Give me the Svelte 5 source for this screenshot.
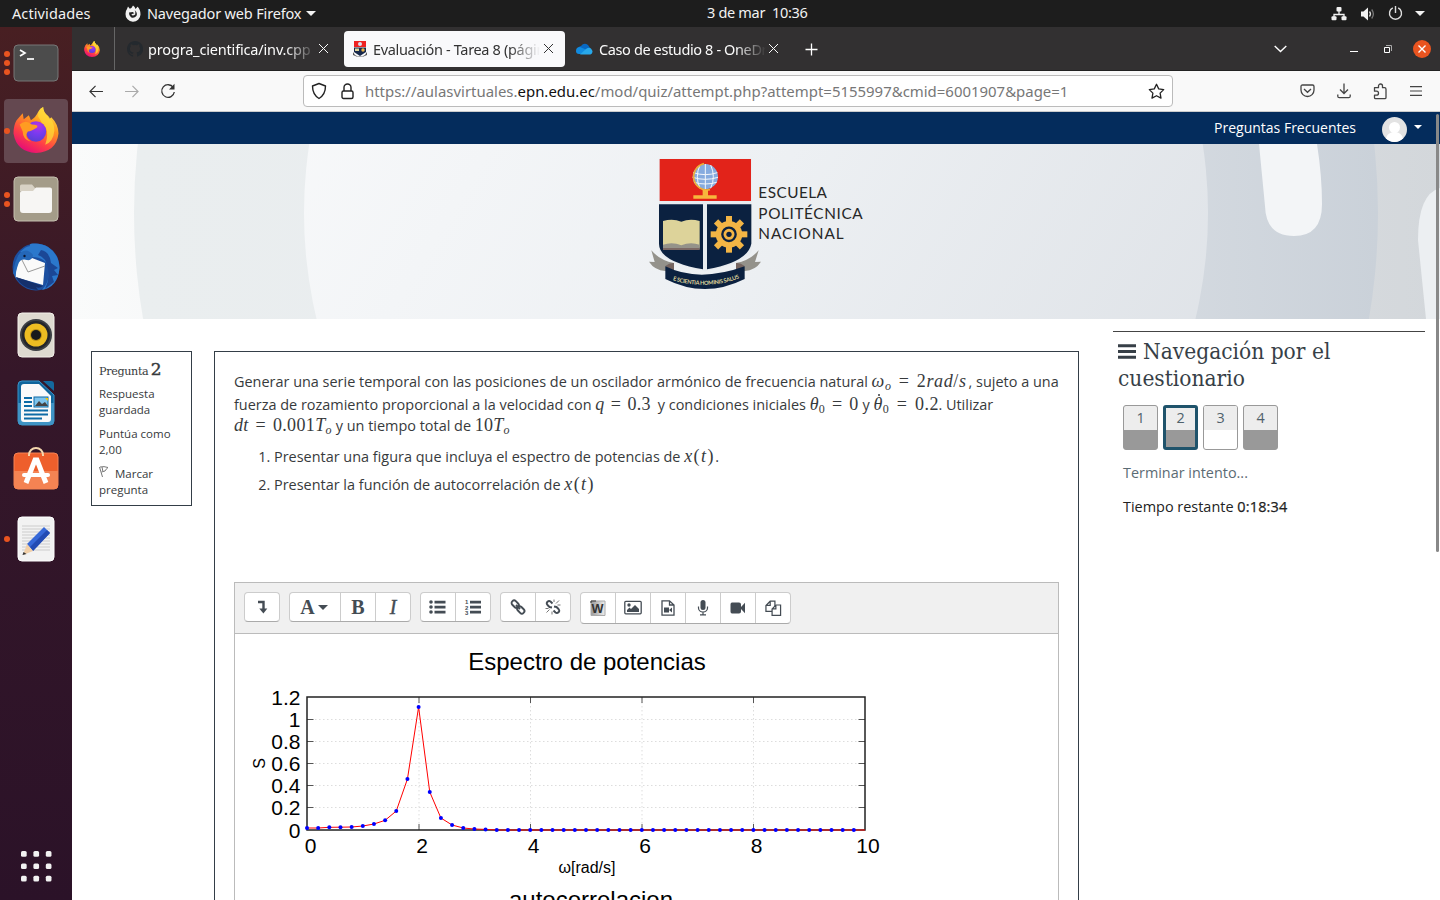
<script>
  const power = [828, 828, 827.3, 827.2, 827, 826, 824, 820.3, 811, 779, 707, 792, 818, 825, 828, 829, 829.4];
  const points = Array.from({ length: 51 }, (_, i) => ({
    x: 307 + i * 11.16,
    y: i < power.length ? power[i] : 830
  }));
  const line = points.map((p) => `${p.x},${p.y}`).join(' ');
  const xTicks = [0, 2, 4, 6, 8, 10].map((v) => ({ v, x: 307.5 + v * 55.75 }));
  const yTicks = [0, 0.2, 0.4, 0.6, 0.8, 1, 1.2].map((v) => ({ v, y: Math.round(829.6 - v * 110.8) + 0.5 }));
  const questions = [
    { n: 1, answered: true },
    { n: 2, answered: true, current: true },
    { n: 3, answered: false },
    { n: 4, answered: true }
  ];
  const teeth = [0, 45, 90, 135, 180, 225, 270, 315];
  const grid = [0, 1, 2].flatMap((r) => [0, 1, 2].map((c) => ({ x: 3 + c * 12, y: 3 + r * 12 })));
</script>

{#snippet firefox(size)}
  <svg width={size} height={size} viewBox="0 0 44 45">
    <defs>
      <linearGradient id="fxBody" x1="0.8" y1="0" x2="0.25" y2="1">
        <stop offset="0" stop-color="#fff44f" /><stop offset="0.35" stop-color="#ff9a1e" />
        <stop offset="0.68" stop-color="#ff4046" /><stop offset="1" stop-color="#e2067e" />
      </linearGradient>
      <radialGradient id="fxGlobe" cx="0.6" cy="0.2" r="0.8">
        <stop offset="0" stop-color="#b833e1" /><stop offset="0.5" stop-color="#7b3af0" /><stop offset="1" stop-color="#5a3fd6" />
      </radialGradient>
    </defs>
    <path d="M3 13 L9 6 L10 12 L15 8 L17 13 Q22 10 24 5 Q26 1 29 0 Q29 5 34 9 L35 12 L37 10 Q44 17 44 26 Q42 44 22 45 Q3 44 0 26 Q0 18 3 13Z" fill="url(#fxBody)" />
    <path d="M24 9 Q24 3 29 0 Q29 6 34 9 Q40 14 40 23 Q39 34 31 37 Q36 22 28 16Z" fill="#ffda38" opacity="0.75" />
    <circle cx="22" cy="24" r="10" fill="url(#fxGlobe)" />
    <path d="M6 17 Q12 12 18 17 Q25 17 23 20 Q17 24 14 24 Q10 29 17 34 Q9 32 9 24Z" fill="#ff9c22" />
  </svg>
{/snippet}

<div class="desktop">
  <header class="system">
    <span class="activities">Actividades</span>
    <svg class="fx-mono" width="16" height="17" viewBox="0 0 16 17"><path d="M2 4 3 1.5 4.8 3.7 Q7 3 8 .5 Q10 1.5 10.5 4 Q13 1 12.5 1.5 Q15.7 5 15.5 9.5 A7.5 7.5 0 0 1 .5 9 Q.4 6 2 4Z" fill="#f2f2f2" /><path d="M4 7.4 7.8 7 9.3 8.3 6.4 9.3 Q7.3 11.5 10.2 9.6 Q10.8 6.4 9.6 5 Q13 7.8 11.4 11 Q9 13.7 6 12.2 Q3.8 10.8 4 7.4Z" fill="#222" /></svg>
    <span class="appname">Navegador web Firefox</span>
    <i class="down"></i>
    <span class="clock">3 de mar&nbsp; 10:36</span>
    <div class="status">
      <svg width="16" height="14" viewBox="0 0 16 14"><path d="M8 4v3M3 10V7.5h10V10" fill="none" stroke="#f2f2f2" stroke-width="1.3" /><g fill="#f2f2f2"><rect x="5.5" y="0" width="5" height="4.5" rx="1" /><rect x=".5" y="9.2" width="5" height="4" rx="1" /><rect x="10.5" y="9.2" width="5" height="4" rx="1" /></g></svg>
      <svg width="16" height="14" viewBox="0 0 16 14"><path d="M1 4.5h2.500L8 .5v13L3.500 9.500H1z" fill="#f2f2f2" /><path d="M9.500 4.500q2 2.500 0 5" fill="none" stroke="#ddd" stroke-width="1.3" /><path d="M11.700 2.500q3.400 4.500 0 9" fill="none" stroke="#777" stroke-width="1.3" /></svg>
      <svg width="15" height="15" viewBox="0 0 15 15"><path d="M4.800 1.900a6 6 0 1 0 5.400 0M7.500 0v7" fill="none" stroke="#ddd" stroke-width="1.4" /></svg>
      <i class="down"></i>
    </div>
  </header>

  <div class="workspace">
    <nav class="dock">
      <div class="app">
        <i class="dots"><b></b><b></b><b></b></i>
        <svg width="46" height="38" viewBox="0 0 46 38"><rect x="1" y="1" width="44" height="36" rx="4" fill="#4c4c4c" stroke="#777" /><path d="M7 6l5 3-5 3" fill="none" stroke="#fff" stroke-width="1.700" /><path d="M14 15h7" stroke="#fff" stroke-width="1.700" /></svg>
      </div>
      <div class="app active"><i class="dots"><b></b></i>{@render firefox(46)}</div>
      <div class="app">
        <i class="dots"><b></b><b></b></i>
        <svg width="46" height="46" viewBox="0 0 46 46"><rect x="1" y="1" width="44" height="44" rx="4" fill="#a49c89" stroke="#c5bfaf" /><path d="M7 15V10q0-1.500 1.500-1.500H19l3 3.500h15v6z" fill="#d8d2c5" /><path d="M7 17q0-2 2-2h11l3-3.500h14q2 0 2 2V34q0 3-3 3H10q-3 0-3-3z" fill="#f7f6f4" /></svg>
      </div>
      <div class="app">
        <svg width="48" height="48" viewBox="0 0 48 48">
          <circle cx="24" cy="24" r="23.500" fill="#1c4fa0" />
          <path d="M8 9Q14 3 18 3Q17 1 20 .500Q30 0 36 4Q47 11 47.500 25Q46 44 30 47Q38 38 37 26Q34 14 20 14Z" fill="#2b78cc" />
          <path d="M29 7q9 2 10 13l7 5-4 2 4 5-6 1 2 6-9 7q5-10 3-20-2-12-10-14z" fill="#1b4796" />
          <path d="M7 12Q16 19 20 15L33 20 31 42 3 34Z" fill="#fafafa" />
          <path d="M8 13l8 16 17-6" fill="none" stroke="#999" />
          <path d="M1 30Q3 16 8 10Q15 4 21 12Q20 18 15 17Q8 15 6 22Q3 29 4 35Z" fill="#2467b8" />
          <path d="M4 34l27 9q-4 3-7 1l2 3Q10 46 4 34z" fill="#15306c" />
          <circle cx="12.500" cy="13" r="1.200" fill="#0b1530" />
        </svg>
      </div>
      <div class="app">
        <svg width="38" height="46" viewBox="0 0 38 46"><rect x="1" y="1" width="36" height="44" rx="4" fill="#dedad0" stroke="#f3f0ea" /><circle cx="19" cy="23" r="16" fill="#3c3f43" /><circle cx="19" cy="23" r="14" fill="#24262a" /><circle cx="19" cy="23" r="11.500" fill="#edbd22" /><circle cx="19" cy="23" r="6" fill="#b98e13" /><circle cx="19" cy="23" r="5" fill="#17191c" /></svg>
      </div>
      <div class="app">
        <svg width="38" height="46" viewBox="0 0 38 46"><path d="M5 1H22L37 15V41q0 4-4 4H5q-4 0-4-4V5q0-4 4-4z" fill="#0f659c" stroke="#3b94c7" /><path d="M1 23h36v18q0 4-4 4H5q-4 0-4-4z" fill="#3f94c5" /><path d="M7 4H22L34 16V39q0 3-3 3H7q-3 0-3-3V7q0-3 3-3z" fill="#fafafa" /><path d="M26 1H34q3 0 3 3V11z" fill="#14699e" /><path d="M7 18h8M7 22h8M7 26h8M7 30.500h24M7 34.500h24M7 38.500h18" stroke="#0d6ba6" stroke-width="1.800" /><rect x="17" y="17" width="14" height="10" fill="#7ec4ec" stroke="#0d6ba6" /><path d="M18 26l4-5 3 3 3-2 3 4z" fill="#444" /><path d="M28 18h3v3z" fill="#f4c600" /></svg>
      </div>
      <div class="app store">
        <svg width="46" height="44" viewBox="0 0 46 44"><rect x="1" y="7" width="44" height="36" rx="4" fill="#ee5f2c" stroke="#f78354" /><path d="M1 25h44v14q0 4-4 4H5q-4 0-4-4z" fill="#f48353" /><path d="M16 10V9a7 7 0 0 1 14 0v1" fill="none" stroke="#f4d7ad" stroke-width="2" /><path d="M13 37 22 14h2l9 23" fill="none" stroke="#fff" stroke-width="5" /><rect x="9" y="27" width="28" height="4" rx="2" fill="#fff" /></svg>
      </div>
      <div class="app">
        <i class="dots"><b></b></i>
        <svg width="38" height="46" viewBox="0 0 38 46"><rect x="1" y="1" width="36" height="44" rx="4" fill="#f2f2f2" stroke="#fff" /><path d="M5 10h28M5 13h28M5 16h28M5 19h28M5 22h28M5 25h28M5 28h28M5 31h28M5 34h28" stroke="#ccc" /><path d="M10 28 27 11l6 6-17 18z" fill="#3668d8" /><path d="M13 31 30 14l3 3-17 18z" fill="#234bb4" /><path d="M10 28l6 7-10 4z" fill="#f1cfa8" /><path d="M6.500 36l3 2-4 1z" fill="#333" /></svg>
      </div>
      <svg class="grid" width="31" height="31" viewBox="0 0 30 30">{#each grid as g}<rect x={g.x - 3} y={g.y - 3} width="5.500" height="5.500" rx="1.500" fill="#f2f2f2" />{/each}</svg>
    </nav>

    <main class="browser">
      <div class="tabs">
        <div class="pinned">{@render firefox(16)}</div>
        <div class="tab">
          <svg width="16" height="16" viewBox="0 0 16 16"><path fill="#24292e" d="M8 0C3.580 0 0 3.580 0 8c0 3.540 2.290 6.530 5.470 7.590.4.070.55-.17.55-.38v-1.340c-2.230.48-2.700-1.070-2.700-1.070-.36-.92-.89-1.170-.89-1.170-.73-.5.050-.49.050-.49.8.060 1.230.83 1.230.83.71 1.220 1.870.87 2.330.66.070-.52.280-.87.510-1.070-1.780-.2-3.640-.89-3.640-3.950 0-.87.310-1.590.82-2.150-.08-.2-.36-1.020.08-2.120 0 0 .67-.21 2.200.82a7.600 7.600 0 0 1 4 0c1.530-1.040 2.200-.82 2.200-.82.44 1.100.16 1.920.08 2.120.51.560.82 1.270.82 2.150 0 3.070-1.870 3.750-3.650 3.950.29.250.54.730.54 1.480v2.200c0 .21.15.46.55.38A8 8 0 0 0 8 0z" /></svg>
          <span class="title t1">progra_cientifica/inv.cpp</span><i class="x"></i>
        </div>
        <div class="tab selected">
          <svg width="14" height="16" viewBox="0 0 14 16"><path d="M1 0h12v6H1z" fill="#e22" /><circle cx="7" cy="3" r="2" fill="#dde" /><path d="M1 6.500h12V11l-6 4-6-4z" fill="#17284a" /><path d="M2 7.500h4V10H2z" fill="#ddd49a" /><circle cx="10" cy="9" r="1.700" fill="#e9b44a" /><path d="M0 11l2 3q5 3 10 0l2-3v3q-7 4-14 0z" fill="#555" /></svg>
          <span class="title t2">Evaluación - Tarea 8 (página</span><i class="x"></i>
        </div>
        <div class="tab third">
          <svg width="17" height="12" viewBox="0 0 17 12"><path d="M2 8Q1 4 5 3Q8-1 12 2L14 5 9 8Z" fill="#0868c2" /><path d="M0 8Q0 4 4 4L11 7 16 11H3Q0 11 0 8Z" fill="#118be0" /><path d="M10 6q4-3 6 1 1.500 3-1.500 4.500H4z" fill="#28a8ea" /></svg>
          <span class="title t3">Caso de estudio 8 - OneDrive</span><i class="x"></i>
        </div>
        <svg class="plus" width="13" height="13" viewBox="0 0 13 13"><path d="M6.500 .5v12M.5 6.500h12" stroke="#fff" stroke-width="1.300" /></svg>
        <div class="window">
          <svg class="w-list" width="13" height="8" viewBox="0 0 13 8"><path d="M.7 1l5.800 5.500L12.300 1" fill="none" stroke="#fff" stroke-width="1.400" /></svg>
          <svg class="w-min" width="8" height="8" viewBox="0 0 8 8"><path d="M0 6.500h8" stroke="#fff" /></svg>
          <svg class="w-max" width="8" height="8" viewBox="0 0 8 8"><path d="M.5 2.500h5v5h-5z" fill="none" stroke="#fff" /><path d="M2 .5h5.500V6" fill="none" stroke="#aaa" /></svg>
          <svg width="18" height="18" viewBox="0 0 18 18"><circle cx="9" cy="9" r="9" fill="#e95420" /><path d="M5.500 5.500l7 7m0-7l-7 7" stroke="#fff" stroke-width="1.400" /></svg>
        </div>
      </div>

      <div class="toolbar">
        <svg width="14" height="13" viewBox="0 0 15 14"><path d="M7 1L1 7l6 6M1 7h14" fill="none" stroke="#333" stroke-width="1.300" /></svg>
        <svg class="fwd" width="14" height="13" viewBox="0 0 15 14"><path d="M8 1l6 6-6 6M14 7H0" fill="none" stroke="#aaa" stroke-width="1.300" /></svg>
        <svg class="reload" width="16" height="16" viewBox="0 0 16 16"><path d="M13.300 4.500A6.300 6.300 0 1 0 14.300 9" fill="none" stroke="#333" stroke-width="1.300" /><path d="M14.500 .8v5.700H9z" fill="#333" /></svg>
        <div class="url">
          <svg width="16" height="18" viewBox="0 0 16 18"><path d="M8 1.500L14.500 4q0 8.500-6.500 12.500Q1.500 12.500 1.500 4z" fill="none" stroke="#222" stroke-width="1.400" stroke-linejoin="round" /></svg>
          <svg class="lock" width="13" height="17" viewBox="0 0 13 17"><path d="M3 8V4.500a3.500 3.500 0 0 1 7 0V8" fill="none" stroke="#222" stroke-width="1.400" /><rect x="1" y="8" width="11" height="7.500" rx="1.500" fill="none" stroke="#222" stroke-width="1.400" /></svg>
          <span class="address">https://aulasvirtuales.<b>epn.edu.ec</b>/mod/quiz/attempt.php?attempt=5155997&amp;cmid=6001907&amp;page=1</span>
          <svg class="star" width="17" height="17" viewBox="0 0 17 17"><path d="M8.500 1.300l2.200 4.600 5 .7-3.600 3.500.9 5-4.500-2.400-4.500 2.400.9-5L1.300 6.600l5-.7z" fill="none" stroke="#222" stroke-width="1.300" stroke-linejoin="round" /></svg>
        </div>
        <div class="tools">
          <svg width="15" height="14" viewBox="0 0 15 14"><path d="M2.500 1h10q1.500 0 1.500 1.500V6a6.500 6.500 0 0 1-13 0V2.500Q1 1 2.500 1z" fill="none" stroke="#444" stroke-width="1.300" /><path d="M4 5l3.500 3.300L11 5" fill="none" stroke="#444" stroke-width="1.300" /></svg>
          <svg width="14" height="16" viewBox="0 0 14 16"><path d="M7 .5v10M3 6.500l4 4 4-4M.8 11.500v1.700q0 1.500 1.500 1.500h9.400q1.500 0 1.500-1.500v-1.700" fill="none" stroke="#444" stroke-width="1.300" /></svg>
          <svg width="15" height="17" viewBox="0 0 15 17"><path d="M1.500 4.700h4V3a2 2 0 0 1 4 0v1.700h2q1.500 0 1.500 1.500v8.300q0 1.200-1.200 1.200H2.500q-1 0-1-1.200v-2.300h2a2 2 0 0 0 0-4h-2z" fill="none" stroke="#444" stroke-width="1.300" stroke-linejoin="round" /></svg>
          <svg width="12" height="10" viewBox="0 0 12 10"><path d="M0 .7h12M0 5h12M0 9.300h12" stroke="#444" stroke-width="1.200" /></svg>
        </div>
      </div>

      <section class="page">
        <div class="topnav">
          <span>Preguntas Frecuentes</span>
          <svg width="25" height="25" viewBox="0 0 25 25"><defs><clipPath id="face"><circle cx="12.500" cy="12.500" r="12.500" /></clipPath></defs><g clip-path="url(#face)"><path d="M0 0h25v25H0z" fill="#e3e3e3" /><circle cx="12.500" cy="10.500" r="5.500" fill="#fff" /><ellipse cx="12.500" cy="22" rx="8.500" ry="7" fill="#fff" /></g></svg>
          <i class="down"></i>
        </div>

        <svg class="banner" width="1368" height="175" viewBox="72 144 1368 175">
          <defs>
            <linearGradient id="ban"><stop offset="0" stop-color="#fafbfb" /><stop offset="1" stop-color="#d3d7db" /></linearGradient>
            <linearGradient id="mid" x1="0" y1="0.2" x2="1" y2="0.8"><stop offset="0" stop-color="#f9fafb" /><stop offset="0.5" stop-color="#edf0f3" /><stop offset="1" stop-color="#dde1e6" /></linearGradient>
            <linearGradient id="ring"><stop offset="0" stop-color="#eaeeef" /><stop offset="0.5" stop-color="#e8ebee" /><stop offset="1" stop-color="#cad1d9" /></linearGradient>
          </defs>
          <path d="M72 144h1368v175H72z" fill="url(#ban)" />
          <circle cx="756" cy="213" r="622" fill="url(#ring)" />
          <circle cx="756" cy="213" r="452" fill="url(#mid)" />
          <path d="M1259 144h58q5 32 5 60 0 32-28 32t-29-30z" fill="#f3f5f7" />
          <path d="M1440 188q-22 6-22 52l8 79h14z" fill="#eceff2" />
          <g transform="translate(630 145) scale(.33333)">
            <path d="M87 41h278v278q-12 34-140 60Q97 350 87 319z" fill="#e8ecf0" />
            <path d="M89 42h274v126H89z" fill="#e2231a" />
            <circle cx="226" cy="95" r="38" fill="#86abdf" />
            <g fill="none" stroke="#f4f7fb" stroke-width="3"><path d="M226 57v76M210 60q-16 35 0 70M242 60q16 35 0 70M190 83q36 12 72 0M188 97q38 12 76 0M192 112q34 10 68 0" /></g>
            <path d="M222 56a40 40 0 1 0 18 78" fill="none" stroke="#efad37" stroke-width="5" /><path d="M218 134h16v17h26v10h-70v-10h28z" fill="#f7b73c" />
            <path d="M87 178h132v195Q87 350 87 296zM231 178h133v118q-10 55-133 77z" fill="#0b2140" />
            <path d="M99 228q30-8 55 2 25-10 55-2v80q-28-10-55-1-27-9-55 1z" fill="#ddd39a" /><path d="M99 299q28-10 55 2 27-12 55-2v14H99z" fill="#95938a" /><path d="M99 309h110v6H99z" fill="#7b6864" />
            {#each teeth as a}<rect x="288" y="213" width="18" height="24" fill="#f3b545" transform="rotate({a} 297 268)" />{/each}
            <circle cx="297" cy="268" r="40" fill="#f3b545" /><circle cx="297" cy="268" r="20" fill="none" stroke="#0b2140" stroke-width="7" /><circle cx="297" cy="268" r="8" fill="#0b2140" />
            <path d="M57 350l17 1-10-35q25 30 68 38v28l-26-4q-32-2-49-28zM393 350l-18 1 11-35q-25 30-68 38v28l26-4q32-2 49-28z" fill="#94928b" />
            <path d="M106 363q12-10 26-9v35zM344 363q-12-10-26-9v35z" fill="#75645f" />
            <path d="M106 364q100 50 238 0v38q-120 60-238 0z" fill="#0b2140" />
            <path id="arc" d="M128 405q100 32 202-6" fill="none" />
            <text class="motto"><textPath href="#arc" textLength="204">E SCIENTIA HOMINIS SALUS</textPath></text>
            <g class="school"><text x="385" y="160" textLength="206">ESCUELA</text><text x="385" y="221" textLength="313">POLITÉCNICA</text><text x="385" y="282" textLength="256">NACIONAL</text></g>
          </g>
        </svg>

        <div class="columns">
          <aside class="info">
            <h3>Pregunta <b>2</b></h3>
            <p>Respuesta guardada</p>
            <p>Puntúa como 2,00</p>
            <p><svg width="10" height="12" viewBox="0 0 10 12"><path d="M.5 1l3 10M1 1q4-1 8 .5Q7 3 6 5L2.500 6M3 1l.8 4" fill="none" stroke="#777" /></svg>Marcar pregunta</p>
          </aside>

          <article class="question">
            <div class="l1">Generar una serie temporal con las posiciones de un oscilador armónico de frecuencia natural <span class="m w-omega"><i>ω<sub>o</sub></i> = 2<i>rad</i>/<i>s</i></span>, sujeto a una</div>
            <div class="l2">fuerza de rozamiento proporcional a la velocidad con <span class="m w-q"><i>q</i> = 0.3</span>&nbsp; y condiciones iniciales <span class="m w-th"><i>θ</i><sub>0</sub> = 0</span> y <span class="m w-dth"><i class="dotted">θ</i><sub>0</sub> = 0.2</span>. Utilizar</div>
            <div class="l3"><span class="m w-dt"><i>dt</i> = 0.001<i>T<sub>o</sub></i></span> y un tiempo total de <span class="m w-10t">10<i>T<sub>o</sub></i></span></div>
            <ol>
              <li>Presentar una figura que incluya el espectro de potencias de <span class="m w-x"><i>x</i>(<i>t</i>)</span>.</li>
              <li>Presentar la función de autocorrelación de <span class="m w-x"><i>x</i>(<i>t</i>)</span></li>
            </ol>

            <div class="editor">
              <div class="buttons">
                <div class="group"><span><svg width="16" height="16" viewBox="0 0 16 16"><path d="M4 3h5.500v8" fill="none" stroke="#444c54" stroke-width="2.400" /><path d="M5.300 9.500h8L9.400 14.500z" fill="#444c54" /></svg></span></div>
                <div class="group"><span class="font">A<i class="down"></i></span><span class="letter">B</span><span class="letter it">I</span></div>
                <div class="group">
                  <span><svg width="18" height="14" viewBox="0 0 18 14"><g fill="#444c54"><circle cx="2" cy="2" r="1.800" /><circle cx="2" cy="7" r="1.800" /><circle cx="2" cy="12" r="1.800" /><path d="M5.500 .7h11v2.700h-11zM5.500 5.700h11v2.700h-11zM5.500 10.700h11v2.700h-11z" /></g></svg></span>
                  <span><svg width="18" height="16" viewBox="0 0 18 16"><g fill="#444c54"><path d="M6 1.700h11v2.700H6zM6 6.700h11v2.700H6zM6 11.700h11v2.700H6z" /><g class="nums"><text x="1" y="5">1</text><text x="1" y="10.500">2</text><text x="1" y="16">3</text></g></g></svg></span>
                </div>
                <div class="group">
                  <span><svg width="16" height="16" viewBox="0 0 16 16"><g fill="none" stroke="#444c54" stroke-width="1.900"><rect x="1.200" y="2.600" width="8" height="5" rx="2.400" transform="rotate(45 5.200 5.100)" /><rect x="6.800" y="8.400" width="8" height="5" rx="2.400" transform="rotate(45 10.800 10.900)" /><path d="M6 6l4 4" /></g></svg></span>
                  <span><svg width="16" height="16" viewBox="0 0 16 16"><g fill="none" stroke="#444c54" stroke-width="1.900"><path d="M7.500 4.500L5.500 2.500Q4 1.300 2.500 2.700T2.500 6L4.500 8 7 8.500M8.500 11.500l2 2q1.500 1.200 3-.2t0-3.300L11.500 8 9 7.500" /><path d="M9 3V.5M11 4.500l3-3M12.500 6h3M4.500 10.500L1.500 13.500M3.500 9.500H.5M7 12.500v3" stroke-width="1" stroke="#777" /></g></svg></span>
                </div>
                <div class="group tall">
                  <span><svg width="16" height="16" viewBox="0 0 16 16"><defs><linearGradient id="wd"><stop offset="0" stop-color="#999" /><stop offset="1" stop-color="#eee" /></linearGradient></defs><path d="M1 1h14v14.500H1z" fill="url(#wd)" stroke="#aaa" /><path d="M1 3V1h5" stroke="#333" fill="none" /><text class="word" x="1.500" y="13" textLength="12" lengthAdjust="spacingAndGlyphs">W</text></svg></span>
                  <span><svg width="18" height="16" viewBox="0 0 18 16"><rect x=".8" y="1.300" width="16.400" height="12.500" rx="1" fill="none" stroke="#444c54" stroke-width="1.300" /><circle cx="5" cy="5" r="1.700" fill="#444c54" /><path d="M3 12V10l2.500-2.500L7 9l4-4 4 4v3z" fill="#444c54" /></svg></span>
                  <span><svg width="14" height="16" viewBox="0 0 14 16"><path d="M1 .8h7.500L13 5v10.200H1zM8.500 .8V5H13" fill="none" stroke="#444c54" stroke-width="1.300" /><path d="M3 7.500h5v5H3zM8 10l3-2.500v5z" fill="#444c54" /></svg></span>
                  <span><svg width="12" height="16" viewBox="0 0 12 16"><rect x="3.500" y="0" width="5" height="10" rx="2.500" fill="#444c54" /><path d="M1.500 6.500V8a4.500 4 0 0 0 9 0V6.500M6 12v2.500M3 14.800h6" fill="none" stroke="#444c54" stroke-width="1.200" /></svg></span>
                  <span><svg width="16" height="14" viewBox="0 0 16 14"><path d="M2 1.500h7q2 0 2 2V6l4-4.200V12.200L11 8v2.500q0 2-2 2H2q-1.500 0-1.500-2v-7Q.5 1.500 2 1.500z" fill="#444c54" /></svg></span>
                  <span><svg width="17" height="17" viewBox="0 0 18 17"><g fill="#fff" stroke="#444c54" stroke-width="1.300"><path d="M5.500 .8h5V11.500H1V5.300zM5.500 .8V5.300H1" /><path d="M11.500 4.800h5v11h-9V9zM11.500 4.800V9H7.500" /></g></svg></span>
                </div>
              </div>
              <svg class="chart" width="824" height="266" viewBox="235 634 824 266">
                <g class="big"><text x="587" y="670">Espectro de potencias</text><text x="591" y="908">autocorrelacion</text></g>
                <g stroke="#ddd" stroke-dasharray="1.500 2.500">
                  {#each xTicks.slice(1, -1) as t}<path d="M{t.x} 698V830" />{/each}
                  {#each yTicks.slice(1, -1) as t}<path d="M307 {t.y}H865" />{/each}
                </g>
                <g stroke="#555">
                  {#each xTicks.slice(1, -1) as t}<path d="M{t.x} 697v6M{t.x} 830v-6" />{/each}
                  {#each yTicks.slice(1, -1) as t}<path d="M307 {t.y}h6.500M865 {t.y}h-6.500" />{/each}
                </g>
                <rect x="307" y="697" width="558" height="133" fill="none" stroke="#222" stroke-width="1.500" />
                <polyline points={line} fill="none" stroke="#f00" stroke-width="1" />
                {#each points.slice(0, -1) as p}<circle cx={p.x} cy={p.y} r="2" fill="#00f" />{/each}
                <g class="ticks">
                  {#each xTicks as t}<text x={t.x + 3} y="853">{t.v}</text>{/each}
                  {#each yTicks as t}<text class="end" x="300.500" y={t.y + 7}>{t.v}</text>{/each}
                </g>
                <g class="label"><text x="587" y="873">ω[rad/s]</text><text transform="translate(265 763.5) rotate(-90)">S</text></g>
              </svg>
            </div>
          </article>

          <aside class="quiznav">
            <h2><svg width="18" height="15" viewBox="0 0 18 15"><path d="M0 1.700h18M0 7.500h18M0 13.300h18" stroke="#373f47" stroke-width="3" /></svg>Navegación por el cuestionario</h2>
            <div class="qs">
              {#each questions as q}<div class="q" class:answered={q.answered} class:current={q.current}><span>{q.n}</span></div>{/each}
            </div>
            <a href="#finish">Terminar intento...</a>
            <p>Tiempo restante <b>0:18:34</b></p>
          </aside>
        </div>
        <i class="scroll"></i>
      </section>
    </main>
  </div>
</div>

<style>
  :global(body) { overflow: hidden; }
  .desktop { width: 1440px; height: 900px; overflow: hidden; display: flex; flex-direction: column; font-family: "Open Sans", sans-serif; color: #373a3c; background: #fff; }
  svg { display: block; flex: none; }
  .down { flex: none; border: 5px solid transparent; border-top-color: currentColor; border-bottom: 0; }
  .system { flex: none; height: 27px; background: #1d1d1d; color: #f2f2f2; display: flex; align-items: center; position: relative; font: 14.5px/20px "Noto Sans", sans-serif; white-space: nowrap; }
  .activities { margin-left: 12px; width: 113px; margin-top: -2px; letter-spacing: .1px; }
  .appname { margin: -2px 5px 0 6px; width: 154px; letter-spacing: -.16px; }
  .clock { position: absolute; left: 707px; top: 2px; letter-spacing: -.32px; }
  .status { margin-left: auto; margin-right: 15px; display: flex; gap: 12px; align-items: center; }
  .status svg:first-child { margin-right: 1px; }
  .workspace { display: flex; flex: 1; min-height: 0; }
  .dock { width: 72px; box-sizing: border-box; padding: 4px 4px 18px; flex: none; display: flex; flex-direction: column; gap: 4px; background: linear-gradient(#481f22, #351729 40%, #2b1228); }
  .app { height: 64px; flex: none; display: flex; align-items: center; justify-content: center; position: relative; border-radius: 4px; }
  .active { background: #644850; padding-bottom: 2px; height: 62px; }
  .store { padding-bottom: 6px; height: 58px; }
  .dots { position: absolute; left: 0; top: 0; bottom: 0; display: flex; flex-direction: column; justify-content: center; gap: 3px; }
  .dots b { width: 6px; height: 6px; border-radius: 50%; background: #e95420; }
  .grid { margin: auto auto 0; }
  .browser { width: 1368px; display: flex; flex-direction: column; }
  .tabs { height: 44px; flex: none; box-sizing: border-box; background: #323031; color: #fbfbfb; display: flex; align-items: center; font: 14.5px/20px "Noto Sans", sans-serif; border-bottom: 1px solid #222; }
  .pinned { width: 42px; height: 43px; border-right: 1px solid #666; display: flex; align-items: center; justify-content: center; }
  .pinned :global(svg) { margin-left: -2px; }
  .tab { display: flex; align-items: center; height: 36px; width: 217px; padding-left: 12px; box-sizing: border-box; margin-top: 1px; }
  .title { width: 167px; margin-left: 6px; overflow: hidden; white-space: nowrap; mask-image: linear-gradient(90deg, #000 82%, transparent); }
  .t1 { letter-spacing: -.17px; margin-left: 5px; width: 168px; }
  .t2 { letter-spacing: -.33px; }
  .t3 { letter-spacing: -.38px; }
  .selected { width: 221px; margin-left: 12px; background: #f9f9fb; color: #333; border-radius: 4px; padding-left: 9px; }
  .third { padding-left: 11px; }
  .x { flex: none; width: 9px; height: 9px; margin: -2px 0 0 3px; background: linear-gradient(45deg, transparent 46%, currentColor 46% 54%, transparent 54%), linear-gradient(-45deg, transparent 46%, currentColor 46% 54%, transparent 54%); }
  .selected .x { margin-left: 4px; }
  .plus { margin: 1px 0 0 23px; }
  .window { margin-left: auto; margin-right: 9px; display: flex; align-items: center; }
  .w-list { margin-right: 63px; }
  .w-min { margin-right: 26px; }
  .w-max { margin-right: 21px; }
  .toolbar { height: 40px; flex: none; background: #f9f9f9; border-bottom: 1px solid #ccc; display: flex; align-items: center; padding-left: 17px; }
  .fwd { margin-left: 22px; }
  .reload { margin-left: 21px; }
  .url { margin-left: 127px; width: 868px; height: 30px; border: 1px solid #bbb; border-radius: 4px; background: #fff; display: flex; align-items: center; color: #777; font: 14.940px/20px "Noto Sans", sans-serif; }
  .url svg:first-child { margin-left: 7px; }
  .lock { margin-left: 14px; }
  .address { margin-left: 11px; white-space: nowrap; }
  .address b { color: #111; font-weight: 400; }
  .star { margin-left: auto; margin-right: 7px; }
  .tools { flex: 1; display: flex; justify-content: flex-end; align-items: center; gap: 22px; padding-right: 18px; }
  .page { flex: 1; min-height: 0; position: relative; display: flex; flex-direction: column; background: #fff; overflow: hidden; }
  .topnav { height: 32px; flex: none; background: #042c5c; color: #fff; display: flex; align-items: center; justify-content: flex-end; padding-right: 18px; font-size: 14px; }
  .topnav span { margin-top: -1px; }
  .topnav svg { margin: 2px 7px 0 26px; }
  .topnav .down { border-width: 4px 4px 0; margin-top: -2px; }
  .motto { font: bold 17px Lato, sans-serif; fill: #ddd39a; }
  .school { font: 46px Lato, sans-serif; fill: #272727; }
  .columns { display: flex; padding: 12px 15px 0 19px; align-items: flex-start; }
  .info { width: 101px; height: 155px; box-sizing: border-box; margin-top: 20px; padding: 7px 7px 0; border: 1px solid #343e47; font-size: 11.500px; line-height: 16px; }
  .info h3 { margin: 0 0 7px; height: 20px; font: 11.200px/21px "DejaVu Serif", serif; letter-spacing: -.35px; white-space: nowrap; }
  .info h3 b { font-size: 17px; font-weight: 400; -webkit-text-stroke: .4px; margin-left: -1px; }
  .info p { margin: 0 0 8px; }
  .info p svg { display: inline-block; margin-right: 6px; }
  .question { width: 865px; height: 569px; box-sizing: border-box; margin: 20px 0 0 22px; padding: 19px 19px 0; border: 1px solid #343e47; font-size: 14.440px; white-space: nowrap; }
  .l1 { line-height: 22px; height: 23px; }
  .l2 { line-height: 22px; height: 22px; }
  .l3 { line-height: 18px; height: 20px; }
  .m { display: inline-block; font-family: "Liberation Serif", serif; font-size: 18px; line-height: 18px; height: 18px; }
  .m sub { font-size: 12px; line-height: 0; vertical-align: -3px; }
  .w-omega { width: 97px; word-spacing: 2px; letter-spacing: .65px; }
  .w-q { width: 55px; word-spacing: 1.500px; letter-spacing: .25px; }
  .w-th { width: 49px; word-spacing: 2px; letter-spacing: .3px; }
  .w-dth { width: 65px; word-spacing: 2.500px; letter-spacing: .5px; }
  .w-dt { width: 98px; word-spacing: 2px; letter-spacing: .35px; }
  .w-10t { width: 36px; letter-spacing: .2px; }
  .w-x { width: 31px; letter-spacing: 1.400px; }
  .dotted { position: relative; }
  .dotted::before { content: ""; position: absolute; left: 5px; top: 0; width: 2px; height: 2px; border-radius: 50%; background: currentColor; }
  .question ol { margin: 7px 0 83px; padding-left: 40px; }
  .question li { height: 28px; line-height: 28px; }
  .editor { border: 1px solid #bbb; height: 400px; }
  .buttons { height: 51px; background: #f0f0f0; border-bottom: 1px solid #bbb; display: flex; gap: 9px; padding: 9px 9px 0; box-sizing: border-box; }
  .group { height: 28px; border: 1px solid #ccc; border-bottom-color: #aaa; border-radius: 4px; background: #fff; display: flex; color: #444c54; }
  .tall { height: 30px; }
  .group span { width: 34px; display: flex; align-items: center; justify-content: center; border-right: 1px solid #ccc; }
  .group span:last-child { border-right: 0; }
  .group .font { width: 50px; gap: 3px; font: bold 20px "Liberation Serif", serif; }
  .group .font .down { margin-right: 2px; }
  .group .letter { font: bold 20px "Liberation Serif", serif; }
  .group .it { font-style: italic; font-weight: 400; -webkit-text-stroke: .4px; }
  .nums { font: bold 6px "Liberation Sans", sans-serif; }
  .word { font: bold 13px "Liberation Sans", sans-serif; fill: #333; }
  .chart { font-family: "Liberation Sans", sans-serif; text-anchor: middle; }
  .big { font-size: 24px; }
  .ticks { font-size: 21px; }
  .ticks .end { text-anchor: end; }
  .label { font-size: 16px; }
  .quiznav { margin-left: 34px; width: 312px; border-top: 1px solid #444; box-sizing: border-box; }
  .quiznav h2 { margin: 6px 0 13px 5px; font: 22.500px/27px "DejaVu Serif Condensed", "DejaVu Serif", serif; color: #373f47; }
  .quiznav h2 svg { display: inline-block; margin-right: 7px; }
  .qs { display: flex; gap: 5px; margin-left: 10px; }
  .q { width: 35px; height: 45px; box-sizing: border-box; border: 1px solid #999; border-radius: 3px; overflow: hidden; text-align: center; font-size: 14.400px; line-height: 24px; color: #50616c; }
  .q span { display: block; background: #ededed; height: 24px; }
  .answered { background: #999; }
  .current { border: 3px solid #1f536b; line-height: 20px; }
  .current span { height: 22px; }
  .quiznav a { display: block; margin: 13px 0 0 10px; color: #5b6b74; text-decoration: none; font-size: 14.400px; line-height: 20px; }
  .quiznav p { margin: 14px 0 0 10px; font-size: 14.450px; line-height: 20px; color: #222; }
  .quiznav b { font-weight: 500; letter-spacing: .2px; -webkit-text-stroke: .25px; }
  .scroll { position: absolute; right: 1px; top: 2px; width: 3px; height: 438px; background: #888; border-radius: 2px; }
</style>
